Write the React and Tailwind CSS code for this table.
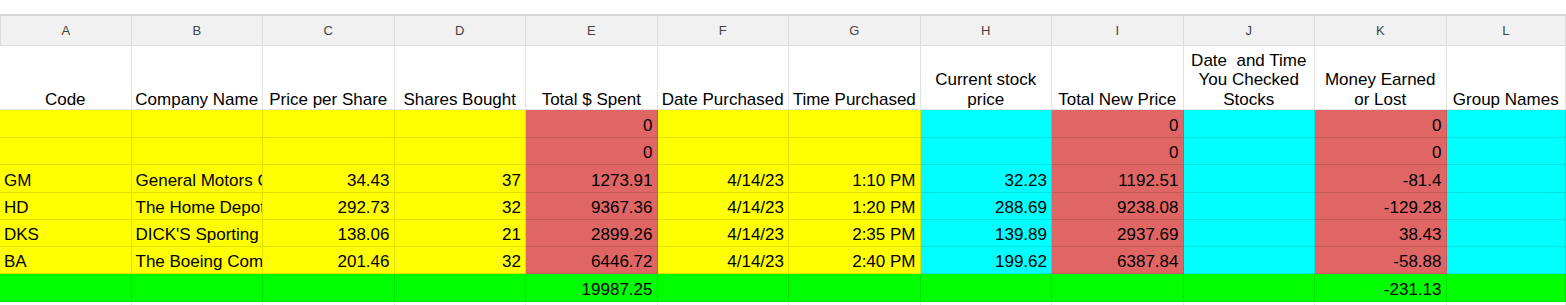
import React from 'react';

const letters = ['A', 'B', 'C', 'D', 'E', 'F', 'G', 'H', 'I', 'J', 'K', 'L'];

const headers = [
  ['Code'],
  ['Company Name'],
  ['Price per Share'],
  ['Shares Bought'],
  ['Total $ Spent'],
  ['Date Purchased'],
  ['Time Purchased'],
  ['Current stock', 'price'],
  ['Total New Price'],
  ['Date\u00a0 and Time', 'You Checked', 'Stocks'],
  ['Money Earned', 'or Lost'],
  ['Group Names'],
];

// column fill for the data rows
const fills = [
  'bg-[#ffff00]', 'bg-[#ffff00]', 'bg-[#ffff00]', 'bg-[#ffff00]',
  'bg-[#e06666]', 'bg-[#ffff00]', 'bg-[#ffff00]', 'bg-[#00ffff]',
  'bg-[#e06666]', 'bg-[#00ffff]', 'bg-[#e06666]', 'bg-[#00ffff]',
];

// text columns are left aligned, the rest right
const leftCols = [0, 1];

const rows = [
  { h: 'h-[28px]', cells: ['', '', '', '', '0', '', '', '', '0', '', '0', ''] },
  { h: 'h-[27px]', cells: ['', '', '', '', '0', '', '', '', '0', '', '0', ''] },
  { h: 'h-[28px]', cells: ['GM', 'General Motors Company', '34.43', '37', '1273.91', '4/14/23', '1:10 PM', '32.23', '1192.51', '', '-81.4', ''] },
  { h: 'h-[27px]', cells: ['HD', 'The Home Depot, Inc.', '292.73', '32', '9367.36', '4/14/23', '1:20 PM', '288.69', '9238.08', '', '-129.28', ''] },
  { h: 'h-[27px]', cells: ['DKS', "DICK'S Sporting Goods, Inc.", '138.06', '21', '2899.26', '4/14/23', '2:35 PM', '139.89', '2937.69', '', '38.43', ''] },
  { h: 'h-[27px]', cells: ['BA', 'The Boeing Company', '201.46', '32', '6446.72', '4/14/23', '2:40 PM', '199.62', '6387.84', '', '-58.88', ''] },
];

const totals = ['', '', '', '', '19987.25', '', '', '', '', '', '-231.13', ''];

const gridCols = 'grid grid-cols-[repeat(11,131.5px)_1fr]';

function Cell({ children, className, left }) {
  return (
    <div
      className={`flex items-end overflow-hidden whitespace-nowrap border-r border-b border-black/[0.12] px-[4px] pb-[1px] leading-[20px] ${
        left ? 'justify-start' : 'justify-end'
      } ${className}`}
    >
      {children}
    </div>
  );
}

export default function App() {
  return (
    <div
      className="w-[1566px] h-[305px] overflow-hidden bg-white text-[17px] text-black"
      style={{ fontFamily: '"Liberation Sans", Arial, sans-serif' }}
    >
      <div className="h-[14px]" />
      <div className="h-[2px] bg-[#d6d6d6]" />

      {/* column letters */}
      <div className={`${gridCols} h-[30px] bg-[#f1f1f1]`}>
        {letters.map((l, i) => (
          <div
            key={l}
            className={`flex items-center justify-center border-r border-b border-[#dcdcdc] text-[13px] text-[#444] ${
              i === 0 ? 'border-l' : ''
            }`}
          >
            {l}
          </div>
        ))}
      </div>

      {/* header row */}
      <div className={`${gridCols} h-[64px]`}>
        {headers.map((lines, i) => (
          <div
            key={i}
            className="flex flex-col items-center justify-end overflow-hidden whitespace-nowrap border-r border-b border-[#e2e2e2] px-[3px] pb-0 text-center leading-[19.5px]"
          >
            {lines.map((t) => (
              <span key={t}>{t}</span>
            ))}
          </div>
        ))}
      </div>

      {/* data rows */}
      {rows.map((r, ri) => (
        <div key={ri} className={`${gridCols} ${r.h}`}>
          {r.cells.map((c, ci) => (
            <Cell key={ci} className={fills[ci]} left={leftCols.includes(ci)}>
              {c}
            </Cell>
          ))}
        </div>
      ))}

      {/* totals */}
      <div className={`${gridCols} h-[28px]`}>
        {totals.map((c, ci) => (
          <Cell key={ci} className="bg-[#00ff00]">
            {c}
          </Cell>
        ))}
      </div>

      <div className={`${gridCols} h-[27px]`}>
        {letters.map((l) => (
          <div key={l} className="border-r border-b border-[#e2e2e2]" />
        ))}
      </div>
    </div>
  );
}
